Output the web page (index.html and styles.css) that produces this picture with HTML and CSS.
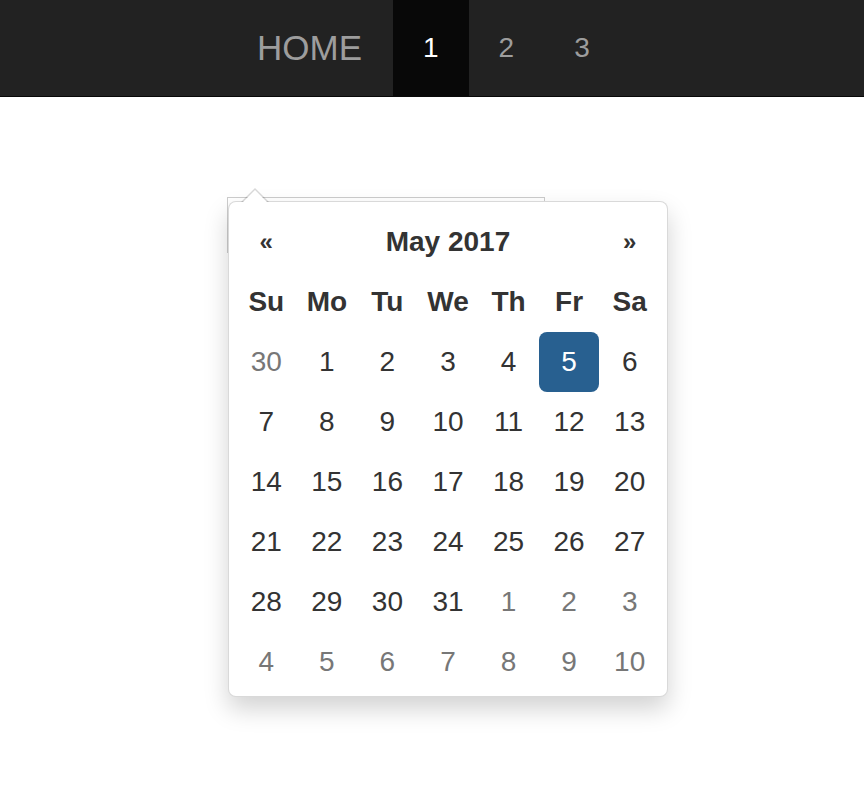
FILE: index.html
```html
<!DOCTYPE html>
<html>
<head>
<meta charset="utf-8">
<link rel="stylesheet" href="styles.css">
</head>
<body>
<nav class="navbar">
  <div class="nav-inner">
    <a class="brand">HOME</a>
    <ul class="nav">
      <li class="active"><a>1</a></li>
      <li><a>2</a></li>
      <li><a>3</a></li>
    </ul>
  </div>
</nav>
<main class="content">
  <div class="field">
    <input class="date-input" type="text">
    <div class="datepicker">
      <table class="cal">
        <thead>
          <tr class="head">
            <th class="arrow">«</th>
            <th class="title" colspan="5">May 2017</th>
            <th class="arrow">»</th>
          </tr>
          <tr class="dow">
            <th>Su</th><th>Mo</th><th>Tu</th><th>We</th><th>Th</th><th>Fr</th><th>Sa</th>
          </tr>
        </thead>
        <tbody>
          <tr><td class="old">30</td><td>1</td><td>2</td><td>3</td><td>4</td><td class="active">5</td><td>6</td></tr>
          <tr><td>7</td><td>8</td><td>9</td><td>10</td><td>11</td><td>12</td><td>13</td></tr>
          <tr><td>14</td><td>15</td><td>16</td><td>17</td><td>18</td><td>19</td><td>20</td></tr>
          <tr><td>21</td><td>22</td><td>23</td><td>24</td><td>25</td><td>26</td><td>27</td></tr>
          <tr><td>28</td><td>29</td><td>30</td><td>31</td><td class="new">1</td><td class="new">2</td><td class="new">3</td></tr>
          <tr><td class="new">4</td><td class="new">5</td><td class="new">6</td><td class="new">7</td><td class="new">8</td><td class="new">9</td><td class="new">10</td></tr>
        </tbody>
      </table>
    </div>
  </div>
</main>
</body>
</html>
```
FILE: styles.css
```css
html {
  height: 100%;
}

html, body {
  margin: 0;
  padding: 0;
  background: #fff;
  font-family: "Liberation Sans", Arial, Helvetica, sans-serif;
  color: #333;
}

body {
  min-height: 790px;
}

.navbar {
  background: #222;
  border-bottom: 1px solid #080808;
  height: 96px;
}

.nav-inner {
  display: flex;
  height: 100%;
  padding-left: 227px;
}

.brand {
  display: flex;
  align-items: center;
  padding: 0 31px 0 30px;
  font-size: 35px;
  color: #9d9d9d;
}

.nav {
  display: flex;
  list-style: none;
  margin: 0;
  padding: 0;
}

.nav li {
  display: flex;
}

.nav a {
  display: flex;
  align-items: center;
  padding: 0 30px;
  font-size: 28px;
  color: #9d9d9d;
}

.nav li.active {
  background: #080808;
}

.nav li.active a {
  color: #fff;
}

.content {
  padding: 100px 0 0 227px;
  min-height: 600px;
}

.field {
  position: relative;
  width: 318px;
}

.date-input {
  display: block;
  box-sizing: border-box;
  width: 318px;
  height: 56px;
  margin: 0;
  border: 1px solid #ccc;
  border-radius: 0;
  background: #fff;
}

.datepicker {
  position: absolute;
  top: 4px;
  left: 1px;
  box-sizing: border-box;
  width: 440px;
  padding: 10px 7px 4px 7px;
  background: #fff;
  border: 1px solid rgba(0, 0, 0, 0.15);
  border-radius: 8px;
  box-shadow: 0 12px 24px rgba(0, 0, 0, 0.175);
}

.datepicker::before {
  content: "";
  position: absolute;
  top: -14px;
  left: 12px;
  border-left: 14px solid transparent;
  border-right: 14px solid transparent;
  border-bottom: 14px solid rgba(0, 0, 0, 0.15);
}

.datepicker::after {
  content: "";
  position: absolute;
  top: -12px;
  left: 14px;
  border-left: 12px solid transparent;
  border-right: 12px solid transparent;
  border-bottom: 12px solid #fff;
}

.cal {
  width: 424px;
  border-collapse: collapse;
  border-spacing: 0;
  table-layout: fixed;
  font-size: 28px;
}

.cal th,
.cal td {
  height: 60px;
  padding: 0;
  text-align: center;
  vertical-align: middle;
}

.cal th {
  font-weight: bold;
}

.cal .arrow {
  font-size: 24px;
}

.cal td.old,
.cal td.new {
  color: #777;
}

.cal td.active {
  background: #286090;
  color: #fff;
  border-radius: 8px;
}
```
